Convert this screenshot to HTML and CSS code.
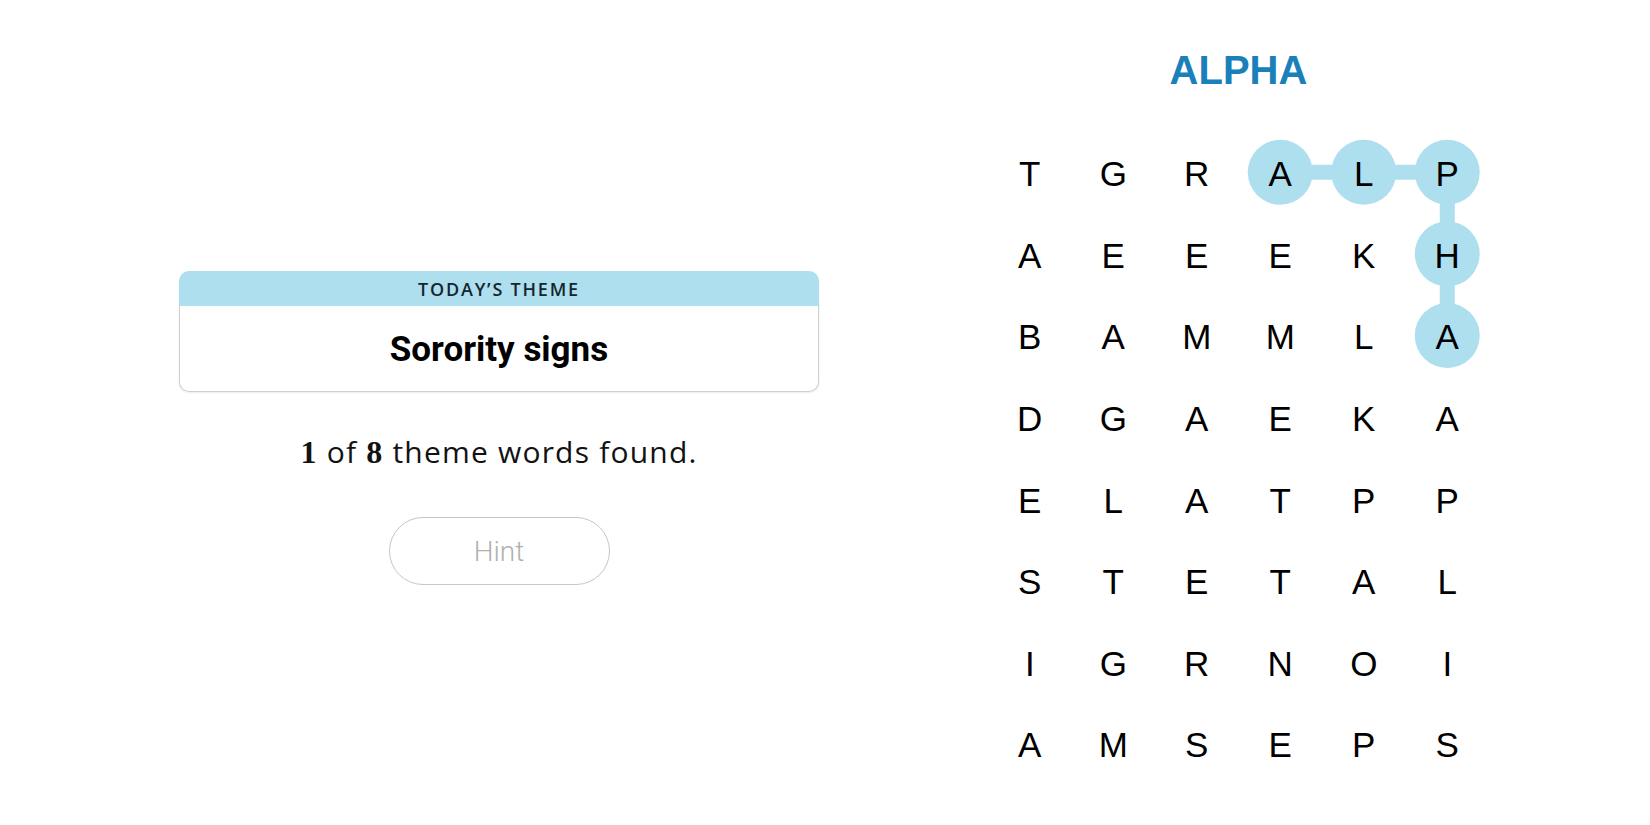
FILE: index.html
```html
<!DOCTYPE html>
<html lang="en">
<head>
<meta charset="utf-8">
<title>Strands</title>
<link rel="stylesheet" href="styles.css">
</head>
<body>
<main class="page">
  <section class="left">
    <div class="theme-card">
      <div class="theme-head">TODAY’S THEME</div>
      <div class="theme-body">Sorority signs</div>
    </div>
    <p class="progress"><b class="num">1</b> of <b class="num">8</b> theme words found.</p>
    <button class="hint" type="button">Hint</button>
  </section>
  <section class="right">
    <h1 class="word">ALPHA</h1>
    <div class="board">
      <svg class="path" width="501" height="653" viewBox="0 0 501 653" aria-hidden="true">
        <polyline points="292.25,39.3 459.25,39.3 459.25,202.5" fill="none" stroke="#aedfee" stroke-width="15"/>
        <circle cx="292.25" cy="39.3" r="32.5" fill="#aedfee"/>
        <circle cx="375.75" cy="39.3" r="32.5" fill="#aedfee"/>
        <circle cx="459.25" cy="39.3" r="32.5" fill="#aedfee"/>
        <circle cx="459.25" cy="120.9" r="32.5" fill="#aedfee"/>
        <circle cx="459.25" cy="202.5" r="32.5" fill="#aedfee"/>
      </svg>
      <span class="cell">T</span><span class="cell">G</span><span class="cell">R</span><span class="cell">A</span><span class="cell">L</span><span class="cell">P</span>
      <span class="cell">A</span><span class="cell">E</span><span class="cell">E</span><span class="cell">E</span><span class="cell">K</span><span class="cell">H</span>
      <span class="cell">B</span><span class="cell">A</span><span class="cell">M</span><span class="cell">M</span><span class="cell">L</span><span class="cell">A</span>
      <span class="cell">D</span><span class="cell">G</span><span class="cell">A</span><span class="cell">E</span><span class="cell">K</span><span class="cell">A</span>
      <span class="cell">E</span><span class="cell">L</span><span class="cell">A</span><span class="cell">T</span><span class="cell">P</span><span class="cell">P</span>
      <span class="cell">S</span><span class="cell">T</span><span class="cell">E</span><span class="cell">T</span><span class="cell">A</span><span class="cell">L</span>
      <span class="cell">I</span><span class="cell">G</span><span class="cell">R</span><span class="cell">N</span><span class="cell">O</span><span class="cell">I</span>
      <span class="cell">A</span><span class="cell">M</span><span class="cell">S</span><span class="cell">E</span><span class="cell">P</span><span class="cell">S</span>
    </div>
  </section>
</main>
</body>
</html>
```

FILE: styles.css
```css
html, body {
  margin: 0;
  padding: 0;
  background: #ffffff;
}

.page {
  display: flex;
  align-items: flex-start;
  width: 1650px;
  height: 825px;
  overflow: hidden;
}

.left {
  width: 640px;
  margin-left: 179px;
  padding-top: 271px;
  display: flex;
  flex-direction: column;
  align-items: center;
}

.theme-card {
  width: 640px;
  display: flex;
  flex-direction: column;
  border-radius: 10px;
  box-shadow: 0 1px 2px rgba(0, 0, 0, 0.08);
}

.theme-head {
  height: 35px;
  background: #aedfee;
  border-radius: 10px 10px 0 0;
  display: flex;
  align-items: center;
  justify-content: center;
  font-family: "Open Sans", "Liberation Sans", sans-serif;
  font-weight: 600;
  font-size: 18px;
  letter-spacing: 1.8px;
  color: #14262f;
}

.theme-body {
  height: 86px;
  box-sizing: border-box;
  border: 1px solid #cfcfcf;
  border-top: none;
  border-radius: 0 0 10px 10px;
  display: flex;
  align-items: center;
  justify-content: center;
  padding-top: 2px;
  font-family: Roboto, "Liberation Sans", sans-serif;
  font-weight: 700;
  font-size: 35px;
  color: #000;
}

.progress {
  margin: 42px 0 0;
  height: 36px;
  line-height: 36px;
  font-family: "Open Sans", "Liberation Sans", sans-serif;
  font-size: 30px;
  letter-spacing: 1.2px;
  color: #121212;
}

.num {
  font-family: "Liberation Serif", "DejaVu Serif", serif;
  font-weight: 700;
  font-size: 32px;
}

.hint {
  margin-top: 47px;
  width: 221px;
  height: 68px;
  border: 1px solid #c6c6c6;
  border-radius: 34px;
  background: #fff;
  font-family: Roboto, "Liberation Sans", sans-serif;
  font-weight: 300;
  font-size: 28px;
  color: #b0b0b0;
  padding: 0;
}

.right {
  width: 501px;
  margin-left: 169px;
  padding-top: 46px;
  display: flex;
  flex-direction: column;
  align-items: center;
}

.word {
  margin: 0;
  height: 48px;
  line-height: 48px;
  font-family: "Liberation Sans", Arial, sans-serif;
  font-weight: 700;
  font-size: 40px;
  color: #1a80ba;
}

.board {
  position: relative;
  margin-top: 39px;
  display: grid;
  grid-template-columns: repeat(6, 83.5px);
  grid-auto-rows: 81.6px;
}

.path {
  position: absolute;
  left: 0;
  top: 0;
}

.cell {
  position: relative;
  display: flex;
  align-items: center;
  justify-content: center;
  font-family: "Liberation Sans", Arial, sans-serif;
  font-size: 35px;
  color: #000;
  line-height: 81px;
}
```
